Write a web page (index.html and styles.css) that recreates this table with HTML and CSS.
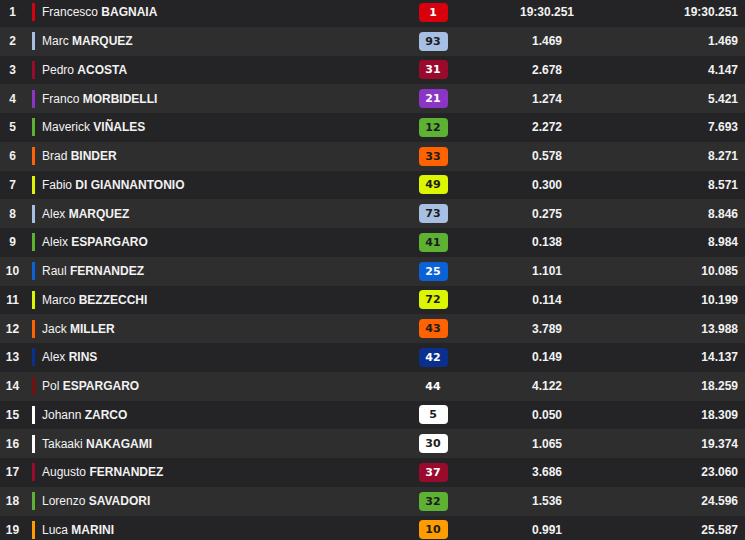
FILE: index.html
```html
<!DOCTYPE html>
<html>
<head>
<meta charset="utf-8">
<link rel="stylesheet" href="styles.css">
</head>
<body>
<div class="table">
  <div class="row"><span class="pos">1</span><span class="bar c-ducati"></span><span class="name">Francesco <b>BAGNAIA</b></span><span class="num"><span class="badge c-ducati light">1</span></span><span class="gap">19:30.251</span><span class="total">19:30.251</span></div>
  <div class="row"><span class="pos">2</span><span class="bar c-gresini"></span><span class="name">Marc <b>MARQUEZ</b></span><span class="num"><span class="badge c-gresini">93</span></span><span class="gap">1.469</span><span class="total">1.469</span></div>
  <div class="row"><span class="pos">3</span><span class="bar c-tech3"></span><span class="name">Pedro <b>ACOSTA</b></span><span class="num"><span class="badge c-tech3 light">31</span></span><span class="gap">2.678</span><span class="total">4.147</span></div>
  <div class="row"><span class="pos">4</span><span class="bar c-pramac"></span><span class="name">Franco <b>MORBIDELLI</b></span><span class="num"><span class="badge c-pramac light">21</span></span><span class="gap">1.274</span><span class="total">5.421</span></div>
  <div class="row"><span class="pos">5</span><span class="bar c-green"></span><span class="name">Maverick <b>VIÑALES</b></span><span class="num"><span class="badge c-green">12</span></span><span class="gap">2.272</span><span class="total">7.693</span></div>
  <div class="row"><span class="pos">6</span><span class="bar c-ktm"></span><span class="name">Brad <b>BINDER</b></span><span class="num"><span class="badge c-ktm">33</span></span><span class="gap">0.578</span><span class="total">8.271</span></div>
  <div class="row"><span class="pos">7</span><span class="bar c-vr46"></span><span class="name">Fabio <b>DI GIANNANTONIO</b></span><span class="num"><span class="badge c-vr46">49</span></span><span class="gap">0.300</span><span class="total">8.571</span></div>
  <div class="row"><span class="pos">8</span><span class="bar c-gresini"></span><span class="name">Alex <b>MARQUEZ</b></span><span class="num"><span class="badge c-gresini">73</span></span><span class="gap">0.275</span><span class="total">8.846</span></div>
  <div class="row"><span class="pos">9</span><span class="bar c-green"></span><span class="name">Aleix <b>ESPARGARO</b></span><span class="num"><span class="badge c-green">41</span></span><span class="gap">0.138</span><span class="total">8.984</span></div>
  <div class="row"><span class="pos">10</span><span class="bar c-trackhouse"></span><span class="name">Raul <b>FERNANDEZ</b></span><span class="num"><span class="badge c-trackhouse light">25</span></span><span class="gap">1.101</span><span class="total">10.085</span></div>
  <div class="row"><span class="pos">11</span><span class="bar c-vr46"></span><span class="name">Marco <b>BEZZECCHI</b></span><span class="num"><span class="badge c-vr46">72</span></span><span class="gap">0.114</span><span class="total">10.199</span></div>
  <div class="row"><span class="pos">12</span><span class="bar c-ktm"></span><span class="name">Jack <b>MILLER</b></span><span class="num"><span class="badge c-ktm">43</span></span><span class="gap">3.789</span><span class="total">13.988</span></div>
  <div class="row"><span class="pos">13</span><span class="bar c-yamaha"></span><span class="name">Alex <b>RINS</b></span><span class="num"><span class="badge c-yamaha light">42</span></span><span class="gap">0.149</span><span class="total">14.137</span></div>
  <div class="row"><span class="pos">14</span><span class="bar c-wild"></span><span class="name">Pol <b>ESPARGARO</b></span><span class="num"><span class="badge plain">44</span></span><span class="gap">4.122</span><span class="total">18.259</span></div>
  <div class="row"><span class="pos">15</span><span class="bar c-lcr"></span><span class="name">Johann <b>ZARCO</b></span><span class="num"><span class="badge c-lcr">5</span></span><span class="gap">0.050</span><span class="total">18.309</span></div>
  <div class="row"><span class="pos">16</span><span class="bar c-lcr"></span><span class="name">Takaaki <b>NAKAGAMI</b></span><span class="num"><span class="badge c-lcr">30</span></span><span class="gap">1.065</span><span class="total">19.374</span></div>
  <div class="row"><span class="pos">17</span><span class="bar c-tech3"></span><span class="name">Augusto <b>FERNANDEZ</b></span><span class="num"><span class="badge c-tech3 light">37</span></span><span class="gap">3.686</span><span class="total">23.060</span></div>
  <div class="row"><span class="pos">18</span><span class="bar c-green"></span><span class="name">Lorenzo <b>SAVADORI</b></span><span class="num"><span class="badge c-green">32</span></span><span class="gap">1.536</span><span class="total">24.596</span></div>
  <div class="row"><span class="pos">19</span><span class="bar c-honda"></span><span class="name">Luca <b>MARINI</b></span><span class="num"><span class="badge c-honda">10</span></span><span class="gap">0.991</span><span class="total">25.587</span></div>
</div>
</body>
</html>
```

FILE: styles.css
```css
html, body {
  margin: 0;
  padding: 0;
  background: #242426;
}
body {
  font-family: "Liberation Sans", Arial, sans-serif;
  font-size: 12px;
  color: #f2f2f2;
  overflow: hidden;
}
.table {
  margin-top: -2px;
}
.row {
  display: grid;
  grid-template-columns: 25px 17px 362px 58px 170px 1fr;
  align-items: center;
  height: 28.75px;
  background: #242426;
}
.row:nth-child(even) {
  background: #2e2e2e;
}
.pos {
  text-align: center;
  font-weight: bold;
}
.bar {
  width: 3px;
  height: 18px;
  margin-left: 7px;
}
.name {
  white-space: nowrap;
}
.name b {
  font-weight: bold;
}
.num {
  display: flex;
  justify-content: center;
}
.badge {
  display: inline-flex;
  align-items: center;
  justify-content: center;
  width: 29px;
  height: 19px;
  border-radius: 4px;
  font-family: "DejaVu Sans", sans-serif;
  font-weight: bold;
  font-size: 11px;
  color: #1c1c1c;
}
.badge.light {
  color: #ffffff;
}
.badge.plain {
  background: none;
  color: #ffffff;
}
.gap {
  text-align: center;
  font-weight: bold;
}
.total {
  text-align: right;
  font-weight: bold;
  padding-right: 7px;
}
.c-ducati { background: #d8000c; }
.c-gresini { background: #a8bfe4; }
.c-tech3 { background: #9a0a2c; }
.c-pramac { background: #8a35c4; }
.c-green { background: #5db133; }
.c-ktm { background: #ff6200; }
.c-vr46 { background: #dbf600; }
.c-trackhouse { background: #0b62d6; }
.c-yamaha { background: #0b2f8e; }
.c-wild { background: #7a0d10; }
.c-lcr { background: #ffffff; }
.c-honda { background: #ff9c00; }
```
